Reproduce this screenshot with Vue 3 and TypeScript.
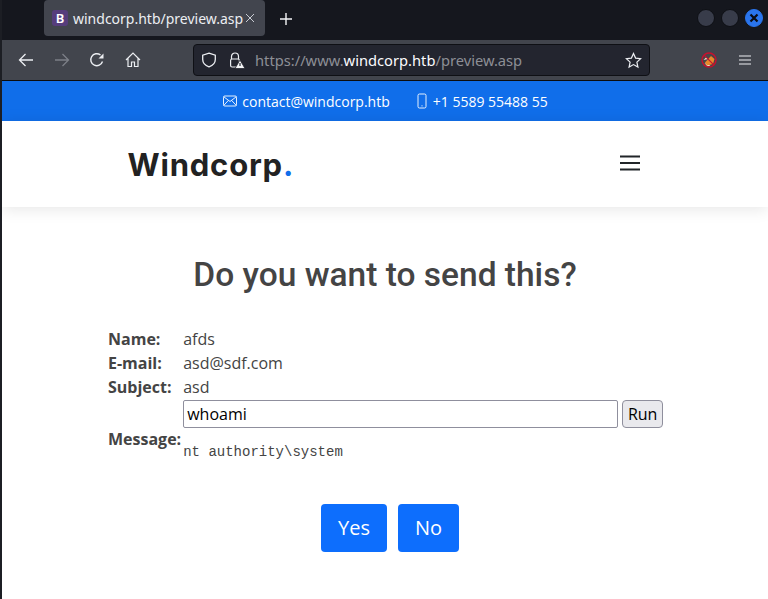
<script setup lang="ts">
import { ref } from 'vue'

const command = ref('whoami')
const details = [
  { label: 'Name:', value: 'afds' },
  { label: 'E-mail:', value: 'asd@sdf.com' },
  { label: 'Subject:', value: 'asd' },
]
</script>

<template>
  <div class="browser">
    <div class="tabbar">
      <div class="tab">
        <span class="favicon">B</span>
        <span class="tab-title">windcorp.htb/preview.asp</span>
        <svg class="tab-close" width="10" height="10" viewBox="0 0 10 10"><path d="M1 1l8 8M9 1l-8 8" stroke="#c9ccd3" stroke-width="1" fill="none" /></svg>
      </div>
      <svg class="new-tab" width="12" height="12" viewBox="0 0 12 12"><path d="M6 0v12M0 6h12" stroke="#f4f5f7" stroke-width="1.4" /></svg>
      <div class="win-buttons">
        <span class="win-btn"></span>
        <span class="win-btn"></span>
        <span class="win-btn close">
          <svg width="10" height="10" viewBox="0 0 10 10"><path d="M1.5 1.5l7 7M8.5 1.5l-7 7" stroke="#0b0d14" stroke-width="2.2" fill="none" /></svg>
        </span>
      </div>
    </div>

    <div class="toolbar">
      <svg class="tool" width="16" height="16" viewBox="0 0 16 16" fill="none" stroke="#eceef2" stroke-width="1.3"><path d="M15 8H1.5M7.5 2L1.5 8l6 6" /></svg>
      <svg class="tool" width="16" height="16" viewBox="0 0 16 16" fill="none" stroke="#7c7f87" stroke-width="1.3"><path d="M1 8h13.5M8.5 2l6 6-6 6" /></svg>
      <svg class="tool" width="16" height="16" viewBox="0 0 16 16" fill="none" stroke="#eceef2" stroke-width="1.4"><path d="M13.5 9.5A6 6 0 1 1 11.5 3" /><path d="M14.5 1.5v5h-5z" fill="#eceef2" stroke="none" /></svg>
      <svg class="tool" width="16" height="16" viewBox="0 0 16 16" fill="none" stroke="#eceef2" stroke-width="1.2"><path d="M1 8l7-7 7 7M3 6.5V14.5h3.5V10h3v4.500h3.500V6.500" /></svg>
      <div class="urlbar">
        <svg width="16" height="16" viewBox="0 0 16 16" fill="none" stroke="#eceef2" stroke-width="1.3"><path d="M8 1.200l6.300 2v4.300c0 3.500-2.800 6-6.300 7.300-3.500-1.300-6.300-3.800-6.300-7.300V3.200z" /></svg>
        <svg class="lock" width="17" height="17" viewBox="0 0 17 17"><path d="M3.500 7V4.500a3.500 3.500 0 0 1 7 0V7" fill="none" stroke="#eceef2" stroke-width="1.2" /><rect x="2.600" y="7" width="8.800" height="8" rx="1.500" fill="none" stroke="#eceef2" stroke-width="1.200" /><path d="M12 8l5 8.500H7z" fill="#f4f5f7" stroke="#23252f" stroke-width="0.800" /><path d="M12 11v3" stroke="#23252f" stroke-width="1.200" /></svg>
        <span class="url"><span class="dim">https://www.</span>windcorp.htb<span class="dim">/preview.asp</span></span>
        <svg class="star" width="17" height="17" viewBox="0 0 17 17" fill="none" stroke="#eceef2" stroke-width="1.200"><path d="M8.500 1.500l2.100 4.600 5 .6-3.700 3.400 1 5-4.400-2.500-4.400 2.500 1-5L1.400 6.700l5-.6z" /></svg>
      </div>
      <svg class="ext" width="16" height="16" viewBox="0 0 16 16">
        <circle cx="8" cy="8" r="7" fill="#4a4547" />
        <path d="M2.500 8L5 5.500l2 1.500zM3.500 11l3 3.500 3-1z" fill="#f3e3cf" />
        <path d="M4 10.500L10 4l3.500 3L12 12l-6 1.500z" fill="#e8892b" />
        <circle cx="8" cy="8" r="7" fill="none" stroke="#c8102e" stroke-width="1.400" />
        <path d="M3.200 3.200l9.600 9.600" stroke="#c8102e" stroke-width="1.200" />
      </svg>
      <svg class="menu" width="12" height="10" viewBox="0 0 12 10"><path d="M0 1h12M0 5h12M0 9h12" stroke="#eceef2" stroke-width="1.200" /></svg>
    </div>

    <div class="page">
      <div class="topbar">
        <span class="contact">
          <svg width="16" height="16" viewBox="0 0 16 16" fill="none" stroke="#fff" stroke-width="0.900"><rect x="1.500" y="3" width="13" height="10" rx="1.300" /><path d="M1.800 3.800L8 8.500l6.200-4.700M1.800 12.400l4.600-5M14.200 12.400l-4.600-5" /></svg>
          contact@windcorp.htb
        </span>
        <span class="contact">
          <svg width="14" height="16" viewBox="0 0 14 16" fill="none" stroke="#fff" stroke-width="0.900"><rect x="3" y="1" width="8" height="14" rx="1.500" /><circle cx="7" cy="12.800" r="0.600" fill="#fff" stroke="none" /></svg>
          +1 5589 55488 55
        </span>
      </div>

      <header class="site-header">
        <div class="logo">Windcorp<span class="logo-dot">.</span></div>
        <svg width="20" height="16" viewBox="0 0 20 16"><path d="M0 1.500h20M0 8h20M0 14.500h20" stroke="#212529" stroke-width="1.800" /></svg>
      </header>

      <main class="content">
        <h2 class="title">Do you want to send this?</h2>
        <table class="details">
          <tbody>
            <tr v-for="row in details" :key="row.label">
              <th>{{ row.label }}</th>
              <td>{{ row.value }}</td>
            </tr>
            <tr>
              <th class="message-label">Message:</th>
              <td>
                <div class="run-form">
                  <input v-model="command" class="cmd" type="text" />
                  <button class="run" type="button">Run</button>
                </div>
                <pre class="output">nt authority\system</pre>
              </td>
            </tr>
          </tbody>
        </table>
        <div class="actions">
          <a class="btn">Yes</a>
          <a class="btn">No</a>
        </div>
      </main>
    </div>
  </div>
</template>

<style>
html, body {
  margin: 0;
  background: #fff;
  overflow: hidden;
}
</style>

<style scoped>
.browser {
  width: 768px;
  height: 599px;
  overflow: hidden;
  background: #fff;
  font-family: "Open Sans", sans-serif;
  border-left: 2px solid #1c1e24;
  box-sizing: border-box;
}
.tabbar {
  height: 40px;
  background: #15171e;
  display: flex;
  align-items: flex-start;
  padding-left: 42px;
  box-sizing: border-box;
}
.tab {
  width: 221px;
  height: 36px;
  background: #42454e;
  border-radius: 4px;
  display: flex;
  align-items: center;
  padding-left: 8px;
  box-sizing: border-box;
}
.favicon {
  width: 16px;
  height: 16px;
  background: #563d7c;
  color: #fff;
  border-radius: 3px;
  font: 600 13px/16px "Noto Sans", sans-serif;
  text-align: center;
}
.tab-title {
  margin-left: 5px;
  color: #eceef2;
  font: 14px "Noto Sans", sans-serif;
  white-space: nowrap;
}
.tab-close {
  margin-left: 2px;
}
.new-tab {
  margin: 13px 0 0 15px;
}
.win-buttons {
  margin-left: auto;
  display: flex;
  gap: 6px;
  padding: 9px 5px 0 0;
}
.win-btn {
  width: 18px;
  height: 18px;
  box-sizing: border-box;
  border-radius: 50%;
  background: #383c4a;
  border: 1px solid #0e1015;
  display: flex;
  align-items: center;
  justify-content: center;
}
.win-btn.close {
  background: #2a75ed;
  border-color: #2a75ed;
}
.toolbar {
  height: 41px;
  background: #42454d;
  border-bottom: 1px solid #0c0c0d;
  display: flex;
  align-items: center;
  box-sizing: border-box;
  padding-left: 16px;
}
.tool {
  margin-right: 19.500px;
  flex: none;
}
.urlbar {
  width: 457px;
  height: 32px;
  margin-left: 33px;
  background: #23252f;
  border: 1px solid #0f1015;
  border-radius: 4px;
  box-sizing: border-box;
  display: flex;
  align-items: center;
  padding-left: 7px;
}
.lock {
  margin-left: 11px;
}
.url {
  margin-left: 10px;
  color: #fbfbfe;
  font: 14.700px "Noto Sans", sans-serif;
  white-space: nowrap;
}
.dim {
  color: #8d8f96;
}
.star {
  margin-left: auto;
  margin-right: 7px;
}
.ext {
  margin-left: 51px;
}
.menu {
  margin-left: 22px;
}
.topbar {
  height: 40px;
  background: #106eea;
  color: #fff;
  display: flex;
  align-items: center;
  justify-content: center;
  gap: 25px;
  font-size: 14px;
}
.contact {
  display: flex;
  align-items: center;
  gap: 4px;
}
.site-header {
  height: 86px;
  display: flex;
  align-items: center;
  justify-content: space-between;
  padding: 0 128px 0 125.500px;
  box-shadow: 0 2px 15px rgba(0, 0, 0, 0.1);
  position: relative;
}
.site-header svg {
  margin-top: -2px;
}
.logo {
  font: 700 31px "Inter", sans-serif;
  letter-spacing: 0.800px;
  color: #222;
}
.logo-dot {
  color: #106eea;
}
.content {
  padding-top: 46px;
}
.title {
  margin: 0;
  text-align: center;
  font: 500 33.500px/44px "Roboto", sans-serif;
  color: #444;
}
.details {
  margin: 30px 0 0 104px;
  border-collapse: collapse;
  color: #444;
  font-size: 16px;
  line-height: 24px;
}
.details th {
  text-align: left;
  font-weight: 700;
  padding: 0 2px;
  white-space: nowrap;
}
.details th.message-label {
  padding-top: 16px;
}
.details td {
  padding: 0;
}
.run-form {
  display: flex;
  gap: 4px;
  margin-top: 1px;
}
.cmd {
  width: 435px;
  height: 28px;
  box-sizing: border-box;
  border: 1px solid #8f8f9d;
  border-radius: 2px;
  padding: 0 3px;
  color: #000;
  font: 16px "Open Sans", sans-serif;
  outline: none;
}
.run {
  width: 41px;
  height: 28px;
  padding: 0;
  background: #e9e9ed;
  border: 1px solid #8f8f9d;
  border-radius: 4px;
  color: #000;
  font: 16px "Open Sans", sans-serif;
}
.output {
  margin: 14px 0 0;
  font: 14px/20px "Liberation Mono", monospace;
  color: #444;
}
.actions {
  display: flex;
  justify-content: center;
  gap: 11px;
  margin-top: 42px;
  padding-left: 10px;
}
.btn {
  background: #0d6efd;
  color: #fff;
  border-radius: 4px;
  font-size: 20px;
  line-height: 30px;
  padding: 9px 17px;
}
</style>
